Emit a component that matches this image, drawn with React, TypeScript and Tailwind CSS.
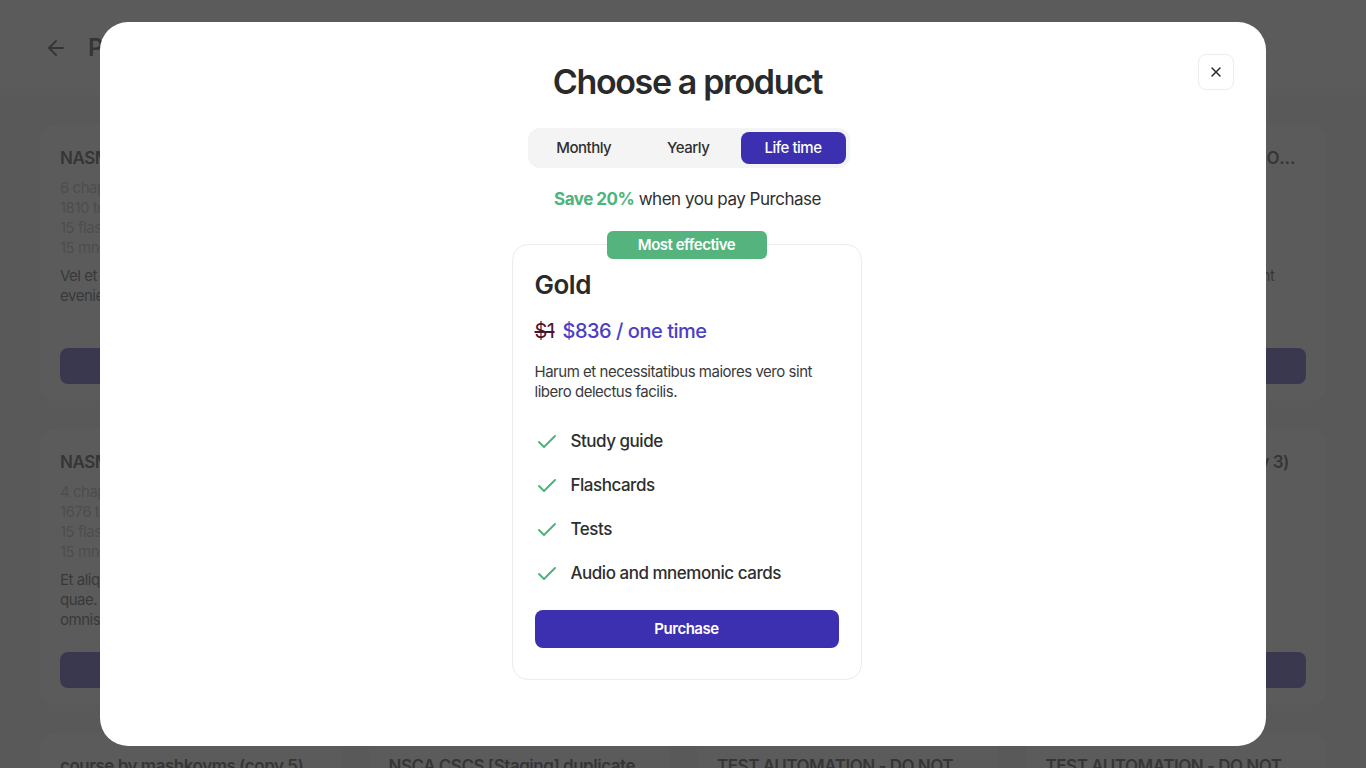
import React from 'react'
import { ArrowLeft, Check, X } from 'lucide-react'

const FONT = { fontFamily: 'Inter, "Open Sans", sans-serif' }

interface BgCard {
  title: string
  stats: string[]
  description: string
}

// page behind the dialog (mostly hidden by the overlay)
const bgCards: BgCard[] = [
  { title: 'NASM CPT Certification Prep', stats: ['6 chapters', '1810 terms', '15 flashcards', '15 mnemonic cards'], description: 'Vel et quia maxime dolor sunt\neveniet aut omnis.' },
  { title: 'NSCA CSCS Exam Prep', stats: ['5 chapters', '1520 terms', '15 flashcards', '15 mnemonic cards'], description: 'Molestiae voluptatem illum nemo\nsint harum.' },
  { title: 'ACE Personal Trainer', stats: ['3 chapters', '980 terms', '15 flashcards', '15 mnemonic cards'], description: 'Sequi ut praesentium dolorum\niure sint.' },
  { title: 'NASM PES TEST AUTOMATION - DO NOT DE TEST AUTOMATION', stats: ['2 chapters', '640 terms', '15 flashcards', '15 mnemonic cards'], description: 'Harum et necessitatibus maior sint\nlibero delectus facilis.\nEos dolorem aut nulla.' },
  { title: 'NASM CES Corrective Exercise', stats: ['4 chapters', '1676 terms', '15 flashcards', '15 mnemonic cards'], description: 'Et aliquam dolorem quo voluptas\nquae. Quia rerum ipsa officiis\nomnis nisi.' },
  { title: 'ISSA Nutrition Coach', stats: ['4 chapters', '1120 terms', '15 flashcards', '15 mnemonic cards'], description: 'Nam ut voluptatem eos quo sint.' },
  { title: 'NCSF Certified Trainer', stats: ['2 chapters', '760 terms', '15 flashcards', '15 mnemonic cards'], description: 'Aut dolorum minima id sed.' },
  { title: 'course by mashkovms (copy 3)', stats: [], description: '' },
  { title: 'course by mashkovms (copy 5)', stats: [], description: '' },
  { title: 'NSCA CSCS [Staging] duplicate', stats: [], description: '' },
  { title: 'TEST AUTOMATION - DO NOT DELETE', stats: [], description: '' },
  { title: 'TEST AUTOMATION - DO NOT DELETE', stats: [], description: '' },
]

const features = ['Study guide', 'Flashcards', 'Tests', 'Audio and mnemonic cards']

function BackgroundPage() {
  return (
    <div className="h-[768px] overflow-hidden bg-[#f2f2f2]">
      <div className="h-[95px] bg-white flex items-center gap-5 px-11">
        <ArrowLeft className="w-6 h-6 text-[#222]" strokeWidth={2} />
        <span className="text-2xl font-semibold text-[#222]">Products</span>
      </div>
      <div className="grid grid-cols-4 gap-x-7 gap-y-7 px-10 pt-[30px]">
        {bgCards.map((card, i) => (
          <div key={i} className="bg-white rounded-2xl px-5 pt-[21px] pb-[17px] h-[276px] flex flex-col">
            <div className="text-[17px] leading-6 font-semibold text-[#222] truncate">{card.title}</div>
            <div className="mt-2 text-[15px] leading-5 text-[#aaa]">
              {card.stats.map((s) => (
                <div key={s}>{s}</div>
              ))}
            </div>
            <div className="mt-2 text-[15px] leading-5 text-[#333] whitespace-pre-line">{card.description}</div>
            <div className="mt-auto h-9 rounded-lg bg-[#3c2fb0]" />
          </div>
        ))}
      </div>
    </div>
  )
}

function ProductCard() {
  return (
    <div className="relative w-[350px] border border-[#ececec] rounded-2xl px-[22px] pt-6 pb-[31px]">
      <div className="absolute -top-[14px] left-1/2 -translate-x-1/2 w-[160px] h-7 rounded-md bg-[#55b47e] text-white text-[15px] font-semibold flex items-center justify-center">
        Most effective
      </div>
      <div className="text-[26px] leading-8 font-semibold text-[#2a2a2a]">Gold</div>
      <div className="mt-4 flex items-center gap-2 text-[20px] leading-7">
        <span className="line-through text-[#4a1530]">$1</span>
        <span className="text-[#4d3ec4] font-medium">$836 / one time</span>
      </div>
      <p className="mt-[17px] text-[15px] leading-5 text-[#3a3a3a]">
        Harum et necessitatibus maiores vero sint libero delectus facilis.
      </p>
      <ul className="mt-[27px] flex flex-col gap-[18px]">
        {features.map((f) => (
          <li key={f} className="flex items-center gap-3 h-[26px]">
            <Check className="w-6 h-6 text-[#4cb47c]" strokeWidth={2} />
            <span className="text-[17px] font-medium text-[#2e2e2e]">{f}</span>
          </li>
        ))}
      </ul>
      <button className="mt-[23px] w-full h-[38px] rounded-lg bg-[#3c2fb0] text-white text-[15px] font-semibold">
        Purchase
      </button>
    </div>
  )
}

export default function App() {
  return (
    <div className="relative w-[1366px] h-[768px] overflow-hidden tracking-[-0.03em]" style={FONT}>
      <BackgroundPage />
      <div className="absolute inset-0 bg-[rgba(58,58,58,0.83)] flex items-center justify-center">
        <div className="relative w-[1166px] h-[724px] bg-white rounded-[28px] flex flex-col items-center pt-9 pl-[9px]">
          <button className="absolute top-8 right-8 w-9 h-9 border border-[#ececec] rounded-lg flex items-center justify-center">
            <X className="w-4 h-4 text-[#2a2a2a]" strokeWidth={2.25} />
          </button>
          <h2 className="text-[34px] leading-[48px] font-semibold text-[#2a2a2a] tracking-[-0.04em]">Choose a product</h2>
          <div className="mt-[22px] ml-[2px] w-[322px] h-10 bg-[#f4f4f4] rounded-xl p-1 flex items-center">
            <button className="flex-1 h-8 text-[15px] font-medium text-[#2f2f2f]">Monthly</button>
            <button className="flex-1 h-8 text-[15px] font-medium text-[#2f2f2f]">Yearly</button>
            <button className="w-[105px] h-8 rounded-lg bg-[#3c2fb0] text-[15px] font-medium text-white">Life time</button>
          </div>
          <div className="mt-[19px] text-[17px] leading-6 text-[#2f2f2f]">
            <span className="font-bold text-[#4cb47c]">Save 20%</span> when you pay Purchase
          </div>
          <div className="mt-[33px] -ml-[2px]">
            <ProductCard />
          </div>
        </div>
      </div>
    </div>
  )
}
